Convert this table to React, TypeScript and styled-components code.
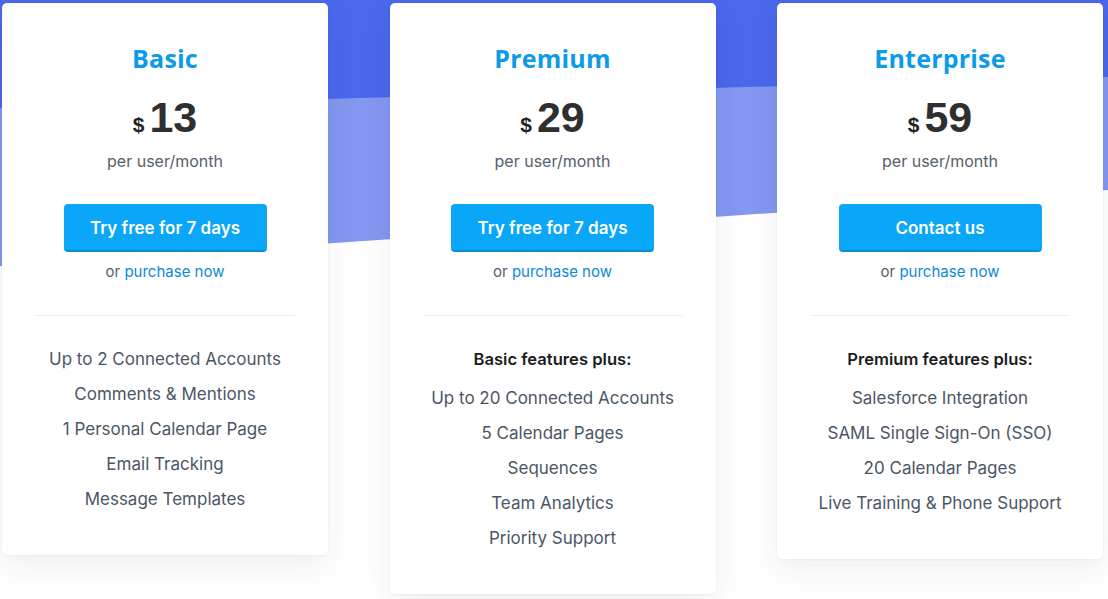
import React from "react";
import styled, { createGlobalStyle } from "styled-components";

const GlobalStyle = createGlobalStyle`
  html, body { margin: 0; padding: 0; background: #ffffff; }
  body { font-family: Inter, "Liberation Sans", sans-serif; }
  * { box-sizing: border-box; }
`;

const Page = styled.div`
  position: relative;
  width: 1108px;
  height: 599px;
  overflow: hidden;
  background: #ffffff;
  isolation: isolate;

  &::before {
    content: "";
    position: absolute;
    inset: 0;
    background: #8497f1;
    clip-path: polygon(0 0, 1108px 0, 1108px 190px, 0 266px);
    z-index: -2;
  }
  &::after {
    content: "";
    position: absolute;
    inset: 0;
    background: #4b67ec;
    clip-path: polygon(0 0, 1108px 0, 1108px 77px, 0 108px);
    z-index: -1;
  }
`;

const CardRow = styled.div`
  display: flex;
  align-items: flex-start;
  gap: 61.5px;
  padding: 3px 0 0 2px;
`;

const Card = styled.div`
  width: 326px;
  background: #ffffff;
  border-radius: 5px;
  box-shadow: 0 12px 34px rgba(30, 40, 60, 0.07), 0 1px 3px rgba(30, 40, 60, 0.05);
  display: flex;
  flex-direction: column;
  align-items: center;
  padding: 39px 0 38px;
`;

const Title = styled.h2`
  margin: 0;
  font-family: "Open Sans", "Liberation Sans", sans-serif;
  font-weight: 700;
  font-size: 25px;
  line-height: 32px;
  color: #0b9be8;
  letter-spacing: 0.2px;
`;

const PriceRow = styled.div`
  margin-top: 19px;
  display: flex;
  align-items: baseline;
  gap: 5px;
  color: #2f2f2f;
  font-family: "Liberation Sans", Arial, sans-serif;
  font-weight: 700;
  line-height: 48px;
`;

const Currency = styled.span`
  font-size: 21px;
  color: #222;
`;

const Amount = styled.span`
  font-size: 43px;
`;

const Period = styled.div`
  margin-top: 0;
  font-size: 16px;
  line-height: 24px;
  color: #56606c;
`;

const CtaButton = styled.button`
  margin-top: 31px;
  width: 203px;
  height: 48px;
  border: none;
  border-bottom: 2px solid #0a8fd6;
  border-radius: 4px;
  background: #0aa6f8;
  color: #ffffff;
  font-family: Inter, "Liberation Sans", sans-serif;
  font-weight: 600;
  font-size: 17px;
  cursor: pointer;
  padding: 2px 0 0;
`;

const Alt = styled.div`
  margin-top: 9px;
  font-size: 15px;
  line-height: 22px;
  color: #56606c;
`;

const AltLink = styled.a`
  color: #0b8ad6;
  text-decoration: none;
`;

const Divider = styled.hr`
  align-self: stretch;
  margin: 32px 33px 26px;
  border: none;
  border-top: 1px solid #eceef1;
  height: 0;
`;

const FeatureList = styled.ul`
  list-style: none;
  margin: 0;
  padding: 0;
  display: flex;
  flex-direction: column;
  align-items: center;
`;

const FeatureHeading = styled.li`
  font-size: 16.6px;
  line-height: 35px;
  font-weight: 600;
  color: #1c1c1c;
  margin-bottom: 4px;
`;

const Feature = styled.li`
  font-size: 17px;
  line-height: 35px;
  color: #4b5665;
`;

type Plan = {
  name: string;
  price: string;
  cta: string;
  heading?: string;
  features: string[];
};

const plans: Plan[] = [
  {
    name: "Basic",
    price: "13",
    cta: "Try free for 7 days",
    features: [
      "Up to 2 Connected Accounts",
      "Comments & Mentions",
      "1 Personal Calendar Page",
      "Email Tracking",
      "Message Templates",
    ],
  },
  {
    name: "Premium",
    price: "29",
    cta: "Try free for 7 days",
    heading: "Basic features plus:",
    features: [
      "Up to 20 Connected Accounts",
      "5 Calendar Pages",
      "Sequences",
      "Team Analytics",
      "Priority Support",
    ],
  },
  {
    name: "Enterprise",
    price: "59",
    cta: "Contact us",
    heading: "Premium features plus:",
    features: [
      "Salesforce Integration",
      "SAML Single Sign-On (SSO)",
      "20 Calendar Pages",
      "Live Training & Phone Support",
    ],
  },
];

export default function App() {
  return (
    <>
      <GlobalStyle />
      <Page>
        <CardRow>
          {plans.map((p) => (
            <Card key={p.name}>
              <Title>{p.name}</Title>
              <PriceRow>
                <Currency>$</Currency>
                <Amount>{p.price}</Amount>
              </PriceRow>
              <Period>per user/month</Period>
              <CtaButton>{p.cta}</CtaButton>
              <Alt>
                or <AltLink href="#">purchase now</AltLink>
              </Alt>
              <Divider />
              <FeatureList>
                {p.heading && <FeatureHeading>{p.heading}</FeatureHeading>}
                {p.features.map((f) => (
                  <Feature key={f}>{f}</Feature>
                ))}
              </FeatureList>
            </Card>
          ))}
        </CardRow>
      </Page>
    </>
  );
}
